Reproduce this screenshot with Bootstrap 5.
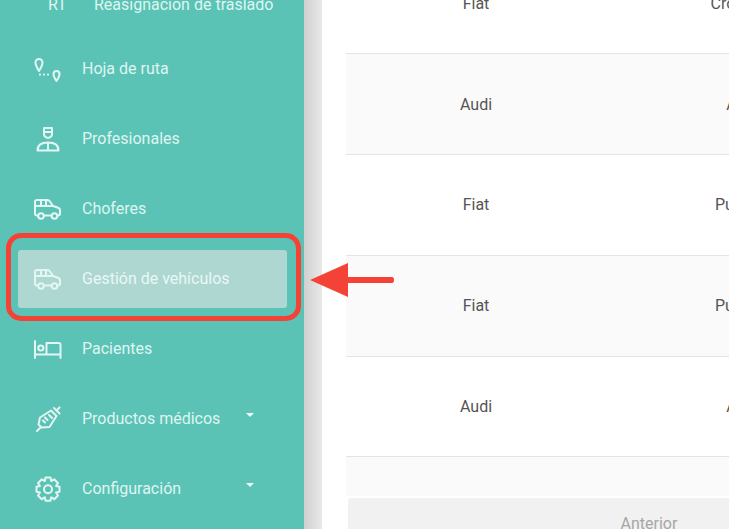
<!DOCTYPE html>
<html lang="es">
<head>
  <meta charset="UTF-8" />
  <title>Gestión de vehículos</title>
  <link href="https://cdn.jsdelivr.net/npm/bootstrap@5.3.2/dist/css/bootstrap.min.css" rel="stylesheet">
  <style>
    html, body { height: 100%; }
    body { font-family: Roboto, "Liberation Sans", sans-serif; overflow: hidden; background: #fff; }
    .app-shell { height: 529px; }
    .side-panel { width: 304px; background: #5bc3b6; overflow: hidden; }
    .side-shadow { width: 18px; background: linear-gradient(90deg, #d0d0d0, #e8e8e8); }
    .main-area { width: 407px; padding-left: 24px; overflow: hidden; background: #fff; }
    .side-item { height: 58px; margin: 0 17px 12px 18px; padding-left: 16px; color: #dff5f1; font-size: 16px; border-radius: 3px; }
    .side-item.is-active { background: #aed7d2; color: #e9f7f5; }
    .side-item.is-sub { height: 40px; margin-top: -15px; margin-bottom: 15px; padding-left: 30px; }
    .side-abbr { width: 46px; }
    .side-icon { width: 28px; height: 26px; margin-right: 20px; flex: none; fill: none; stroke: #e3f6f3; stroke-width: 2; stroke-linecap: round; stroke-linejoin: round; }
    .side-caret { width: 0; height: 0; border-left: 4.5px solid transparent; border-right: 4.5px solid transparent; border-top: 4.5px solid #f0faf8; position: relative; top: -4px; margin-left: auto; margin-right: 33px; }
    .car-table { width: 520px; table-layout: fixed; margin: -47px 0 0; color: #555; font-size: 16px; }
    .car-table td { height: 100.75px; padding: 1px 0 0; text-align: center; vertical-align: middle; border-bottom: 1.5px solid #e4e4e4; }
    .car-table tr.is-odd td { background: #fafafa; }
    .car-table tr.is-end td { height: 39px; border-bottom: 0; }
    .pager-btn { width: 602px; height: 44px; margin: 2px 0 0 2px; background: #f1f1f1; color: #a6a6a6; border: 0; border-radius: 3px; font-size: 16px; text-align: center; padding-top: 14px; }
    .note-box { position: absolute; left: 6px; top: 233px; width: 295px; height: 88px; border: 5px solid #f44336; border-radius: 15px; }
    .note-arrow { position: absolute; left: 308px; top: 260px; width: 90px; height: 40px; }
  </style>
</head>
<body>
  <svg width="0" height="0" class="position-absolute">
    <symbol id="ico-car" viewBox="0 1 28 26">
      <path d="M4 20.500H3Q1 20.500 1 18.500V7Q1 5 3 5H13Q15 5 16 6.500L19 11L23.500 12.500Q26 13.300 26 15.500V18.500Q26 20.500 24 20.500H23.500M10 20.500H17.500M1 11H19M7 5V11M12 5V11" />
      <circle cx="7" cy="21" r="2.800" /><circle cx="20.500" cy="21" r="2.800" />
    </symbol>
  </svg>

  <div class="app-shell d-flex position-relative">
    <nav class="side-panel flex-shrink-0">
      <div class="side-item is-sub d-flex align-items-center"><span class="side-abbr">RT</span><span>Reasignación de traslado</span></div>
      <div class="side-item d-flex align-items-center">
        <svg class="side-icon" viewBox="0 0 28 26"><path d="M5 15Q1.500 9.500 1.500 6.500A3.500 3.500 0 0 1 8.500 6.500Q8.500 9.500 5 15ZM22.500 25Q19.500 20.500 19.500 18A3 3 0 0 1 25.500 18Q25.500 20.500 22.500 25Z" /><path d="M6 18.500V18.600M10 18.500V18.600M14 18.500V18.600" stroke-width="2.200" /></svg>
        <span>Hoja de ruta</span>
      </div>
      <div class="side-item d-flex align-items-center">
        <svg class="side-icon" viewBox="0 0 28 26"><path d="M10 2H18V8.500Q18 11 14 12Q10 11 10 8.500ZM10 6H18M3.500 24.500Q3.500 16.500 14 16.500Q24.500 16.500 24.500 24.500ZM14 17V24.500" /></svg>
        <span>Profesionales</span>
      </div>
      <div class="side-item d-flex align-items-center">
        <svg class="side-icon"><use href="#ico-car" /></svg>
        <span>Choferes</span>
      </div>
      <div class="side-item is-active d-flex align-items-center">
        <svg class="side-icon"><use href="#ico-car" /></svg>
        <span>Gestión de vehículos</span>
      </div>
      <div class="side-item d-flex align-items-center">
        <svg class="side-icon" viewBox="0 1 28 26"><path d="M1 6V23M1 19.500H26.500V23M26.500 19.500V10Q26.500 8 24.500 8H12.500V19.500" /><circle cx="6.800" cy="13" r="2.600" /></svg>
        <span>Pacientes</span>
      </div>
      <div class="side-item d-flex align-items-center">
        <svg class="side-icon" viewBox="0 0 28 26"><path d="M3 25L7 21M7.500 21.500L4.500 18.500L6 11.500L17 4.500L22.500 10L15.500 21ZM15 9L18 12M11 11.500L13.500 14M9 14.500L11 16.500M20 2L25.500 7.500M22.500 4.500L25.500 1.500" /></svg>
        <span>Productos médicos</span>
        <span class="side-caret"></span>
      </div>
      <div class="side-item d-flex align-items-center">
        <svg class="side-icon" viewBox="0 0 28 26"><path d="M11.500 1.500H16.500L17.200 5L20.300 3.300L24 7.200L22 10L25.500 10.800V15.800L22 16.500L24 19.500L20.300 23.200L17.200 21.300L16.500 24.800H11.500L10.800 21.300L7.700 23.200L4 19.500L6 16.500L2.500 15.800V10.800L6 10L4 7.200L7.700 3.300L10.800 5Z" /><circle cx="14" cy="13.200" r="4" /></svg>
        <span>Configuración</span>
        <span class="side-caret"></span>
      </div>
    </nav>

    <div class="side-shadow flex-shrink-0"></div>

    <main class="main-area">
      <table class="car-table">
        <tr><td>Fiat</td><td>Cronos</td></tr>
        <tr class="is-odd"><td>Audi</td><td>A4</td></tr>
        <tr><td>Fiat</td><td>Punto</td></tr>
        <tr class="is-odd"><td>Fiat</td><td>Punto</td></tr>
        <tr><td>Audi</td><td>A4</td></tr>
        <tr class="is-odd is-end"><td></td><td></td></tr>
      </table>
      <div class="pager-btn">Anterior</div>
    </main>

    <div class="note-box"></div>
    <svg class="note-arrow" viewBox="0 0 90 40"><path d="M2 20L40 3V17H84Q86 17 86 20Q86 23 84 23H40V37Z" fill="#f44336" /></svg>
  </div>

  <script src="https://cdn.jsdelivr.net/npm/bootstrap@5.3.2/dist/js/bootstrap.bundle.min.js"></script>
</body>
</html>
